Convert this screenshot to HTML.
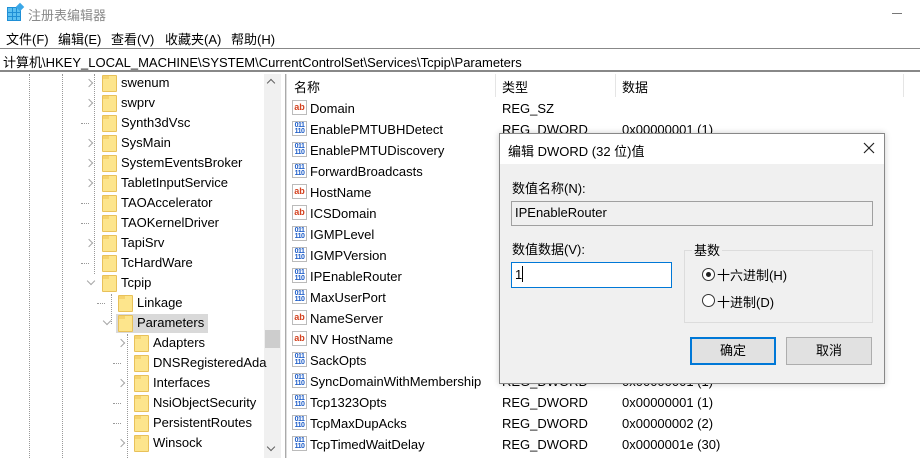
<!DOCTYPE html>
<html><head><meta charset="utf-8"><style>
*{margin:0;padding:0;box-sizing:border-box}
body{width:920px;height:458px;overflow:hidden;background:#fff;font-family:"Liberation Sans","Noto Sans CJK SC",sans-serif;font-size:13px;color:#000;position:relative}
.a{position:absolute;white-space:nowrap}
.fold{position:absolute;width:15px;height:17px;background:#fde58c;border:1px solid #e8c15a;border-radius:1px}
.fold:after{content:"";position:absolute;left:0;top:0;width:6px;height:3px;background:#f6d36e}
.chev{position:absolute;width:6px;height:6px;border-right:1.4px solid #a6a6a6;border-bottom:1.4px solid #a6a6a6}
.dots{position:absolute;height:0;border-top:1px dotted #999}
.vd{position:absolute;width:0;border-left:1px dotted #999}
.ic{position:absolute;width:15px;height:15px;border:1px solid #bbb;background:#fff;font-size:9px;font-weight:bold;line-height:13px;text-align:center}
.ab{color:#d3401e}
.bn{color:#1b5bc7;font-size:7px;line-height:6px;letter-spacing:-0.5px;padding-top:1px}
</style></head><body>
<!-- title -->
<div class="a" style="left:7px;top:7px;width:14px;height:14px;background:#1f8fd6;"></div>
<div class="a" style="left:8px;top:8px;width:12px;height:12px;background:
linear-gradient(#1f8fd6,#1f8fd6) 4px 0/1px 12px no-repeat,linear-gradient(#1f8fd6,#1f8fd6) 8px 0/1px 12px no-repeat,linear-gradient(#1f8fd6,#1f8fd6) 0 4px/12px 1px no-repeat,linear-gradient(#1f8fd6,#1f8fd6) 0 8px/12px 1px no-repeat,#5cc0f0;"></div>
<div class="a" style="left:17px;top:4px;width:6px;height:6px;background:#3aa7e8;transform:rotate(45deg)"></div>
<div class="a" style="left:28px;top:5px;font-size:13px;color:#8a8a8a">注册表编辑器</div>
<div class="a" style="left:892px;top:13px;width:10px;height:1px;background:#777"></div>
<!-- menu -->
<div class="a" style="left:6px;top:29px">文件(F)</div>
<div class="a" style="left:58px;top:29px">编辑(E)</div>
<div class="a" style="left:111px;top:29px">查看(V)</div>
<div class="a" style="left:165px;top:29px">收藏夹(A)</div>
<div class="a" style="left:231px;top:29px">帮助(H)</div>
<!-- address -->
<div class="a" style="left:0;top:48px;width:920px;height:24px;border-top:1px solid #888;border-bottom:2px solid #888;background:#fff"></div>
<div class="a" style="left:3px;top:52px">计算机\HKEY_LOCAL_MACHINE\SYSTEM\CurrentControlSet\Services\Tcpip\Parameters</div>
<!-- tree -->
<div class="a" style="left:264px;top:74px;width:17px;height:384px;background:#f0f0f0"></div>
<div class="a" style="left:265px;top:330px;width:15px;height:18px;background:#cdcdcd"></div>
<div class="a" style="left:268px;top:80px;width:6px;height:6px;border-left:1.4px solid #606060;border-top:1.4px solid #606060;transform:rotate(45deg)"></div>
<div class="a" style="left:268px;top:444px;width:6px;height:6px;border-right:1.4px solid #606060;border-bottom:1.4px solid #606060;transform:rotate(45deg)"></div>
<div class="a" style="left:281px;top:74px;width:5px;height:384px;background:#fff;border-right:1px solid #aaa"></div>
<div class="a" style="left:286px;top:74px;width:1px;height:384px;background:#ddd"></div>
<div class="vd" style="left:29px;top:74px;height:384px"></div>
<div class="vd" style="left:62px;top:74px;height:384px"></div>
<div class="vd" style="left:94px;top:74px;height:200px"></div>
<div class="vd" style="left:111px;top:294px;height:30px"></div>
<div class="vd" style="left:127px;top:334px;height:124px"></div>
<div id="tree"></div>
<!-- list header -->
<div class="a" style="left:294px;top:77px">名称</div>
<div class="a" style="left:495px;top:74px;width:1px;height:23px;background:#e5e5e5"></div>
<div class="a" style="left:502px;top:77px">类型</div>
<div class="a" style="left:615px;top:74px;width:1px;height:23px;background:#e5e5e5"></div>
<div class="a" style="left:622px;top:77px">数据</div>
<div class="a" style="left:903px;top:74px;width:1px;height:23px;background:#e5e5e5"></div>
<div id="list"></div>
<!-- dialog -->
<div class="a" style="left:499px;top:133px;width:386px;height:251px;background:#f0f0f0;border:1px solid #888;box-shadow:0 0 6px rgba(0,0,0,0.2)">
 <div class="a" style="left:0;top:0;width:384px;height:30px;background:#fff"></div>
 <div class="a" style="left:8px;top:7px">编辑 DWORD (32 位)值</div>
 <svg class="a" style="left:363px;top:8px" width="12" height="12"><path d="M1 1L11 11M11 1L1 11" stroke="#222" stroke-width="1.2"/></svg>
 <div class="a" style="left:12px;top:44px">数值名称(N):</div>
 <div class="a" style="left:11px;top:67px;width:362px;height:25px;border:1px solid #a0a0a0;background:#f0f0f0"></div>
 <div class="a" style="left:15px;top:71px">IPEnableRouter</div>
 <div class="a" style="left:12px;top:105px">数值数据(V):</div>
 <div class="a" style="left:11px;top:128px;width:161px;height:26px;border:1px solid #0078d7;background:#fff"></div>
 <div class="a" style="left:15px;top:133px">1</div>
 <div class="a" style="left:22px;top:132px;width:1px;height:16px;background:#000"></div>
 <div class="a" style="left:184px;top:116px;width:189px;height:73px;border:1px solid #dcdcdc"></div>
 <div class="a" style="left:192px;top:106px;background:#f0f0f0;padding:0 2px">基数</div>
 <div class="a" style="left:202px;top:134px;width:13px;height:13px;border:1px solid #333;border-radius:50%;background:#fff"></div>
 <div class="a" style="left:206px;top:138px;width:5px;height:5px;border-radius:50%;background:#222"></div>
 <div class="a" style="left:217px;top:131px">十六进制(H)</div>
 <div class="a" style="left:202px;top:160px;width:13px;height:13px;border:1px solid #333;border-radius:50%;background:#fff"></div>
 <div class="a" style="left:217px;top:158px">十进制(D)</div>
 <div class="a" style="left:190px;top:203px;width:86px;height:28px;border:2px solid #0078d7;background:#e1e1e1;text-align:center;line-height:24px">确定</div>
 <div class="a" style="left:286px;top:203px;width:86px;height:28px;border:1px solid #adadad;background:#e1e1e1;text-align:center;line-height:26px">取消</div>
</div>
<script>
var t=[["swenum",1,0],["swprv",1,0],["Synth3dVsc",0,0],["SysMain",1,0],["SystemEventsBroker",1,0],["TabletInputService",1,0],["TAOAccelerator",0,0],["TAOKernelDriver",0,0],["TapiSrv",1,0],["TcHardWare",0,0],["Tcpip",2,0],["Linkage",0,1],["Parameters",2,1],["Adapters",1,2],["DNSRegisteredAda",0,2],["Interfaces",1,2],["NsiObjectSecurity",0,2],["PersistentRoutes",0,2],["Winsock",1,2]];
var h="";t.forEach(function(r,i){var y=73+i*20,l=r[2],fx=102+l*16,cx=fx-13;
if(r[0]=="Parameters")h+='<div class="a" style="left:'+(fx-2)+'px;top:'+(y+1)+'px;width:92px;height:19px;background:#d9d9d9"></div>';
if(r[1]==1)h+='<div class="chev" style="left:'+(cx-3)+'px;top:'+(y+7)+'px;transform:rotate(-45deg)"></div>';
else if(r[1]==2)h+='<div class="chev" style="left:'+(cx-1)+'px;top:'+(y+5)+'px;transform:rotate(45deg)"></div>';
else h+='<div class="dots" style="left:'+(cx-8)+'px;top:'+(y+10)+'px;width:8px"></div>';
h+='<div class="fold" style="left:'+fx+'px;top:'+(y+2)+'px"></div><div class="a" style="left:'+(fx+19)+'px;top:'+(y+2)+'px">'+r[0]+'</div>';});
document.getElementById("tree").innerHTML=h;
var L=[["Domain",1,"REG_SZ",""],["EnablePMTUBHDetect",0,"REG_DWORD","0x00000001 (1)"],["EnablePMTUDiscovery",0,"REG_DWORD","0x00000001 (1)"],["ForwardBroadcasts",0,"REG_DWORD","0x00000000 (0)"],["HostName",1,"REG_SZ",""],["ICSDomain",1,"REG_SZ",""],["IGMPLevel",0,"REG_DWORD",""],["IGMPVersion",0,"REG_DWORD",""],["IPEnableRouter",0,"REG_DWORD",""],["MaxUserPort",0,"REG_DWORD",""],["NameServer",1,"REG_SZ",""],["NV HostName",1,"REG_SZ",""],["SackOpts",0,"REG_DWORD",""],["SyncDomainWithMembership",0,"REG_DWORD","0x00000001 (1)"],["Tcp1323Opts",0,"REG_DWORD","0x00000001 (1)"],["TcpMaxDupAcks",0,"REG_DWORD","0x00000002 (2)"],["TcpTimedWaitDelay",0,"REG_DWORD","0x0000001e (30)"]];
h="";L.forEach(function(r,i){var y=98+i*21;
h+=r[1]?'<div class="ic ab" style="left:292px;top:'+(y+2)+'px">ab</div>':'<div class="ic bn" style="left:292px;top:'+(y+2)+'px">011<br>110</div>';
h+='<div class="a" style="left:310px;top:'+(y+3)+'px">'+r[0]+'</div><div class="a" style="left:502px;top:'+(y+3)+'px">'+r[2]+'</div><div class="a" style="left:622px;top:'+(y+3)+'px">'+r[3]+'</div>';});
document.getElementById("list").innerHTML=h;
</script>
</body></html>
